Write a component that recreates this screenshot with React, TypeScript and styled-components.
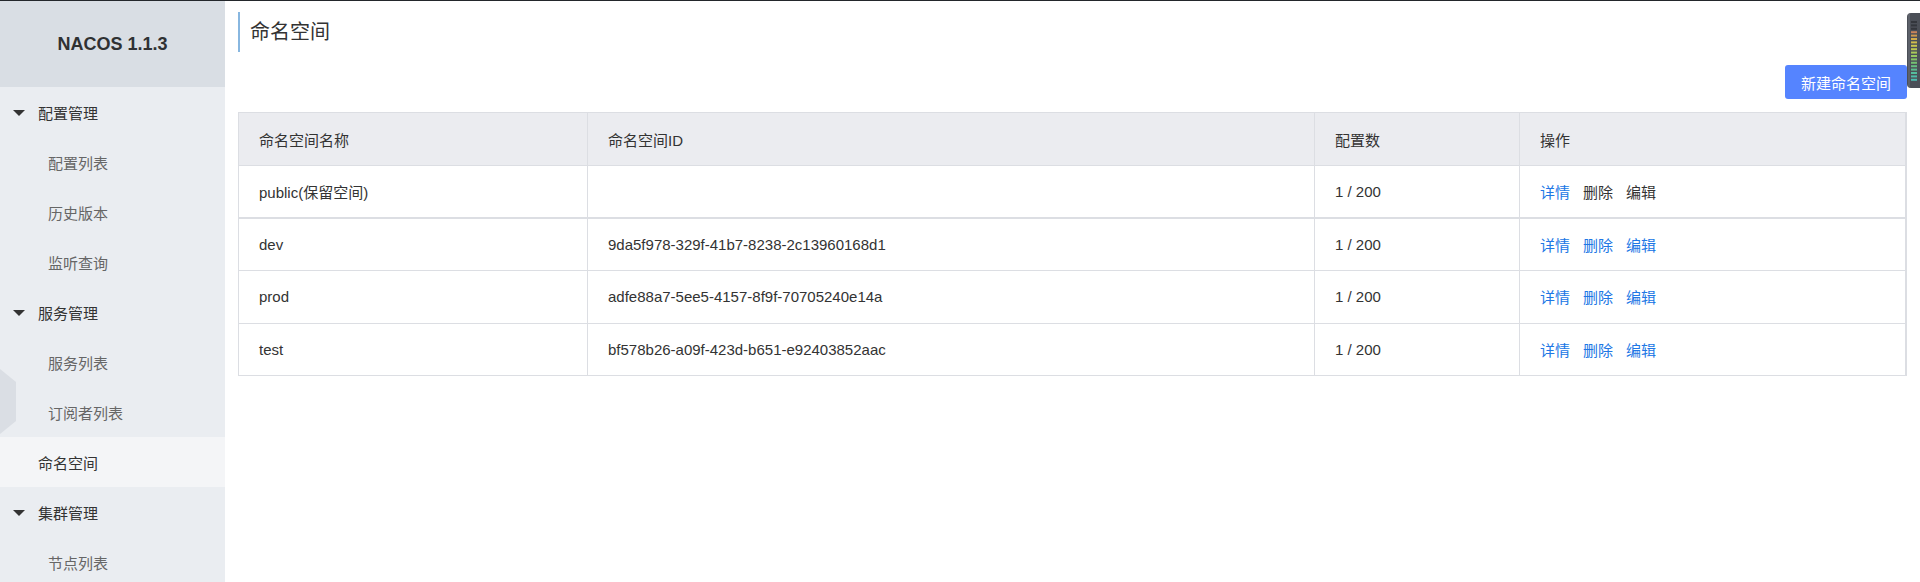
import React from "react";
import styled, { createGlobalStyle } from "styled-components";

const GlobalStyle = createGlobalStyle`
  html, body { margin: 0; padding: 0; background: #fff; }
  body {
    font-family: "Liberation Sans", "Noto Sans CJK SC", sans-serif;
    color: #333;
    overflow: hidden;
  }
  * { box-sizing: border-box; }
`;

const Page = styled.div`
  display: flex;
  border-top: 1px solid #23272b;
  min-height: 581px;
  position: relative;
`;

const Sidebar = styled.aside`
  width: 225px;
  flex: none;
  background: #eaedf1;
  position: relative;
  display: flex;
  flex-direction: column;
`;

const Brand = styled.div`
  height: 86px;
  background: #d9dee4;
  display: flex;
  align-items: center;
  justify-content: center;
  font-family: "Liberation Sans", sans-serif;
  font-weight: bold;
  font-size: 18px;
  color: #2f3133;
  padding-top: 1px;
`;

const MenuItem = styled.div<{ $level: "group" | "sub" | "top"; $active?: boolean }>`
  height: 50px;
  flex: none;
  display: flex;
  align-items: center;
  font-size: 15px;
  padding-left: ${(p) => (p.$level === "group" ? "13px" : p.$level === "sub" ? "48px" : "38px")};
  color: ${(p) => (p.$level === "sub" ? "#666" : "#333")};
  background: ${(p) => (p.$active ? "#f4f5f7" : "transparent")};
`;

const Caret = styled.span`
  width: 0;
  height: 0;
  border-left: 6px solid transparent;
  border-right: 6px solid transparent;
  border-top: 6px solid #333;
  margin-right: 13px;
  margin-top: 1px;
`;

const Handle = styled.svg`
  position: absolute;
  left: 0;
  top: 368px;
`;

const Main = styled.main`
  flex: 1;
  padding: 11px 13px 0 13px;
  display: flex;
  flex-direction: column;
`;

const Title = styled.h1`
  margin: 0;
  height: 40px;
  line-height: 40px;
  border-left: 2px solid #88b7e0;
  padding-left: 10px;
  font-size: 20px;
  font-weight: normal;
  color: #333;
`;

const Toolbar = styled.div`
  display: flex;
  justify-content: flex-end;
  margin-top: 13px;
`;

const PrimaryButton = styled.button`
  height: 34px;
  width: 122px;
  border: none;
  border-radius: 3px;
  background: #5584ff;
  color: #fff;
  font-family: "Liberation Sans", "Noto Sans CJK SC", sans-serif;
  font-size: 15px;
  padding: 0;
`;

const Table = styled.table`
  margin-top: 13px;
  width: 100%;
  table-layout: fixed;
  border-collapse: collapse;
  border: 1px solid #dcdee3;
  border-right-width: 2px;
  font-size: 15px;
`;

const Th = styled.th`
  height: 53px;
  background: #ebecf0;
  text-align: left;
  font-weight: normal;
  color: #333;
  padding: 0 20px;
  border: 1px solid #dcdee3;
`;

const Tr = styled.tr<{ $thick?: boolean }>`
  border-bottom: ${(p) => (p.$thick ? "2px" : "1px")} solid #dcdee3;
`;

const Td = styled.td`
  height: 52.5px;
  padding: 0 20px;
  color: #333;
  border-left: 1px solid #dcdee3;
  border-right: 1px solid #dcdee3;
  white-space: nowrap;
`;

const Actions = styled.div`
  display: flex;
  gap: 13px;
`;

const Link = styled.a<{ $muted?: boolean }>`
  color: ${(p) => (p.$muted ? "#333" : "#2077e5")};
  text-decoration: none;
  cursor: pointer;
`;

const Meter = styled.svg`
  position: absolute;
  right: 0;
  top: 12px;
`;

const rows = [
  { name: "public(保留空间)", id: "", count: "1 / 200", locked: true },
  { name: "dev", id: "9da5f978-329f-41b7-8238-2c13960168d1", count: "1 / 200" },
  { name: "prod", id: "adfe88a7-5ee5-4157-8f9f-70705240e14a", count: "1 / 200" },
  { name: "test", id: "bf578b26-a09f-423d-b651-e92403852aac", count: "1 / 200" },
];

const meterColors = [
  "#33363c", "#33363c", "#33363c", "#c9845a", "#cf9a4e", "#d2ad4c", "#d0bd4c",
  "#c9c64e", "#bcc853", "#a9c85a", "#96c660", "#84c367", "#74c172", "#66bf80",
  "#5cbd8f", "#54bc9d", "#4fbba8", "#4cbaaf",
];

export default function App() {
  return (
    <>
      <GlobalStyle />
      <Page>
        <Sidebar>
          <Brand>NACOS 1.1.3</Brand>
          <MenuItem $level="group"><Caret />配置管理</MenuItem>
          <MenuItem $level="sub">配置列表</MenuItem>
          <MenuItem $level="sub">历史版本</MenuItem>
          <MenuItem $level="sub">监听查询</MenuItem>
          <MenuItem $level="group"><Caret />服务管理</MenuItem>
          <MenuItem $level="sub">服务列表</MenuItem>
          <MenuItem $level="sub">订阅者列表</MenuItem>
          <MenuItem $level="top" $active>命名空间</MenuItem>
          <MenuItem $level="group"><Caret />集群管理</MenuItem>
          <MenuItem $level="sub">节点列表</MenuItem>
          <Handle width="17" height="66" viewBox="0 0 17 66">
            <polygon points="0,0 16,13 16,52 0,65" fill="#dadee4" />
          </Handle>
        </Sidebar>
        <Main>
          <Title>命名空间</Title>
          <Toolbar>
            <PrimaryButton>新建命名空间</PrimaryButton>
          </Toolbar>
          <Table>
            <colgroup>
              <col style={{ width: "349px" }} />
              <col style={{ width: "727px" }} />
              <col style={{ width: "205px" }} />
              <col />
            </colgroup>
            <thead>
              <tr>
                <Th>命名空间名称</Th>
                <Th>命名空间ID</Th>
                <Th>配置数</Th>
                <Th>操作</Th>
              </tr>
            </thead>
            <tbody>
              {rows.map((r, i) => (
                <Tr key={r.name} $thick={i === 0}>
                  <Td>{r.name}</Td>
                  <Td>{r.id}</Td>
                  <Td>{r.count}</Td>
                  <Td>
                    <Actions>
                      <Link>详情</Link>
                      <Link $muted={r.locked}>删除</Link>
                      <Link $muted={r.locked}>编辑</Link>
                    </Actions>
                  </Td>
                </Tr>
              ))}
            </tbody>
          </Table>
        </Main>
        <Meter width="13" height="75" viewBox="0 0 13 75">
          <path d="M4 0 H13 V75 H4 Q0 75 0 71 V4 Q0 0 4 0 Z" fill="#4b4f57" />
          <rect x="1" y="1" width="2" height="73" fill="#5d616a" />
          {meterColors.map((c, i) => (
            <rect key={i} x="4" y={8 + i * 3.4} width="6" height="2" fill={c} />
          ))}
        </Meter>
      </Page>
    </>
  );
}
